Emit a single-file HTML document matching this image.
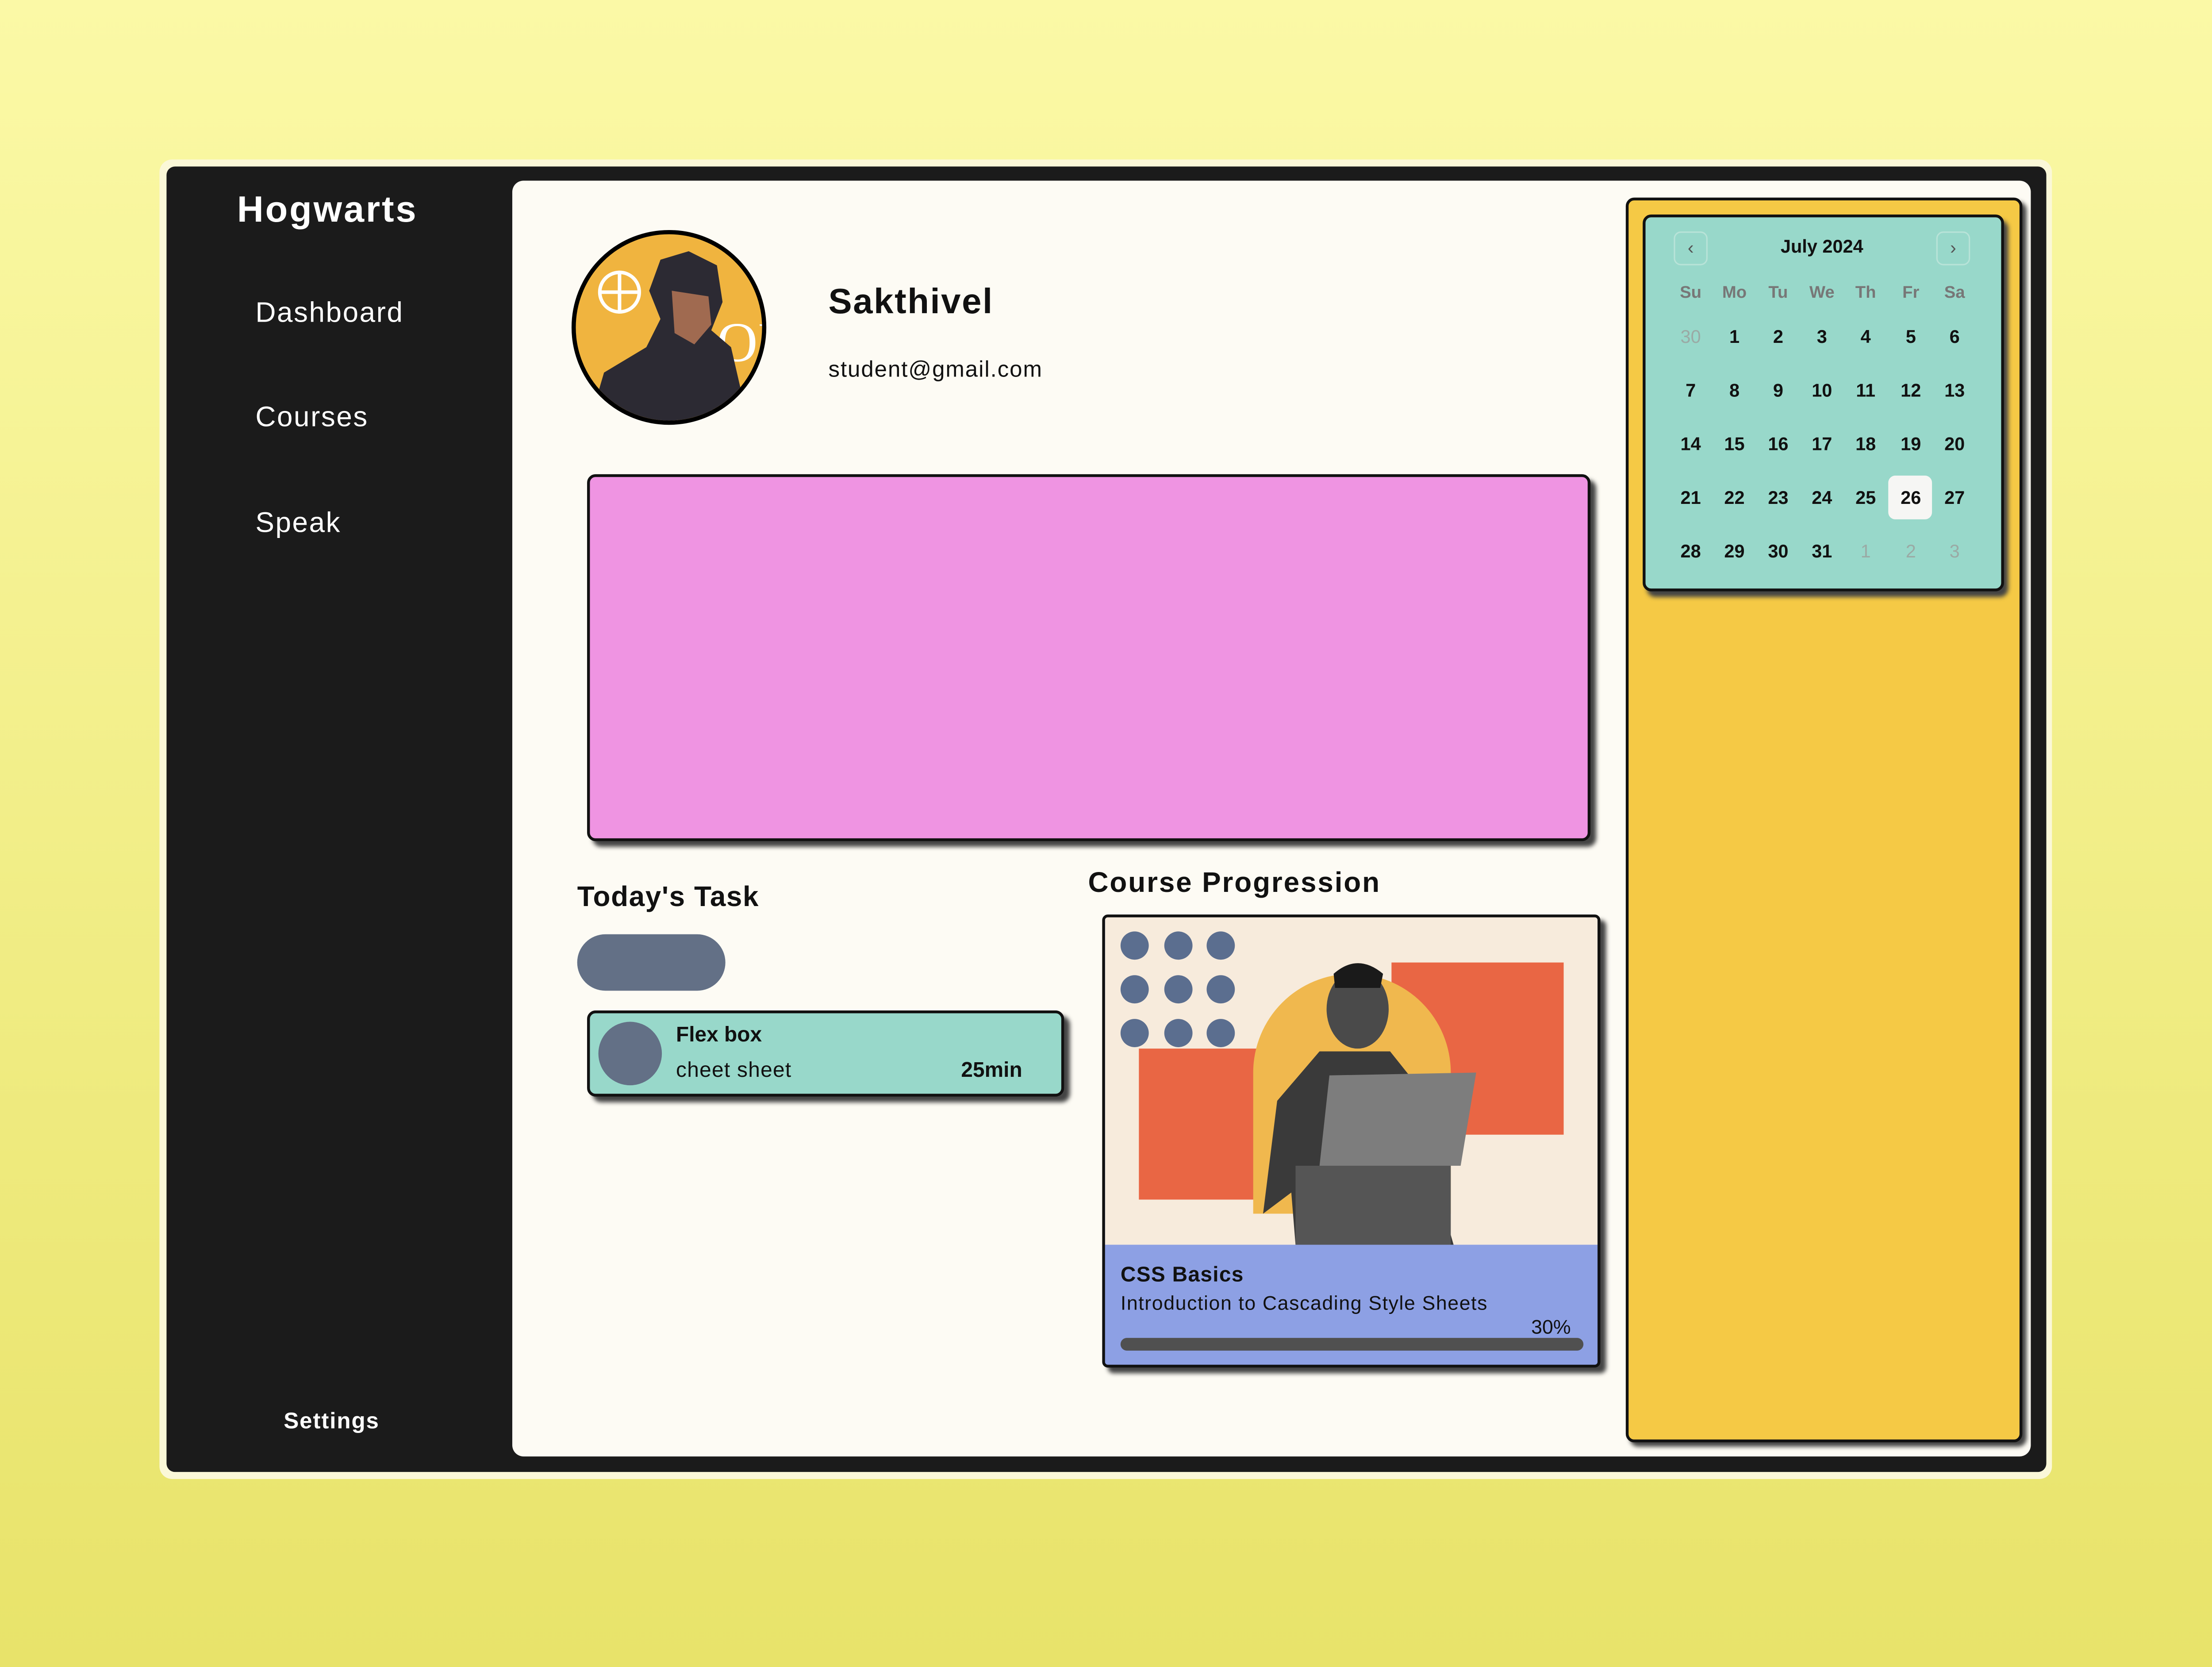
<!DOCTYPE html>
<html><head><meta charset="utf-8"><style>
*{margin:0;padding:0;box-sizing:border-box}
html,body{width:5088px;height:3768px;overflow:hidden}
body{background:linear-gradient(#fbf9a6,#e8e36a);font-family:"Liberation Sans",sans-serif}
#s{position:absolute;left:0;top:0;width:1568px;height:1161px;transform:scale(3.19,3.19);transform-origin:0 0}
.a{position:absolute}
.t{position:absolute;white-space:nowrap;line-height:1}
.b{font-weight:bold}
.cal .t{transform:translateX(-50%);font-size:13px;font-weight:bold;color:#111}
</style></head><body><div id="s">
<div class="a" style="left:113px;top:113px;width:1341px;height:935px;background:#fbf8d8;border-radius:9px"></div>
<div class="a" style="left:118px;top:118px;width:1332px;height:925px;background:#1b1b1b;border-radius:6px"></div>
<div class="t b" style="left:168px;top:135px;font-size:26px;color:#fff;letter-spacing:1.2px">Hogwarts</div>
<div class="t" style="left:181px;top:212px;font-size:20px;color:#fff;letter-spacing:.8px">Dashboard</div>
<div class="t" style="left:181px;top:286px;font-size:20px;color:#fff;letter-spacing:.8px">Courses</div>
<div class="t" style="left:181px;top:361px;font-size:20px;color:#fff;letter-spacing:.8px">Speak</div>
<div class="t b" style="left:201px;top:1000px;font-size:16px;color:#fff;letter-spacing:.6px">Settings</div>
<div class="a" style="left:363px;top:128px;width:1076px;height:904px;background:#fdfbf4;border-radius:8px"></div>
<div class="a" style="left:405px;top:163px;width:138px;height:138px;border-radius:50%;border:3px solid #000;background:#f0b43f;overflow:hidden">
<svg width="132" height="132" viewBox="0 0 132 132">
<circle cx="31" cy="41" r="14" fill="none" stroke="#fff" stroke-width="2.5"/><line x1="17" y1="41" x2="45" y2="41" stroke="#fff" stroke-width="2.5"/><line x1="31" y1="27" x2="31" y2="55" stroke="#fff" stroke-width="2.5"/>
<text x="100" y="90" font-size="40" fill="#fff" font-family="Liberation Serif">OI</text>
<path d="M10 132 L20 98 L50 80 L60 60 L52 40 L60 18 L80 12 L100 22 L104 48 L96 68 L110 80 L122 132Z" fill="#2c2a33"/>
<path d="M68 40 L94 44 L96 64 L84 78 L70 70Z" fill="#a06a50"/>
</svg></div>
<div class="t b" style="left:587px;top:202px;font-size:25px;color:#111;letter-spacing:.8px">Sakthivel</div>
<div class="t" style="left:587px;top:255px;font-size:16px;color:#111;letter-spacing:.6px">student@gmail.com</div>
<div class="a" style="left:416px;top:336px;width:711px;height:260px;background:#ef94e2;border:2px solid #111;border-radius:6px;box-shadow:4px 4px 3px #444"></div>
<div class="t b" style="left:409px;top:626px;font-size:20px;color:#111;letter-spacing:.5px">Today's Task</div>
<div class="a" style="left:409px;top:662px;width:105px;height:40px;background:#637086;border-radius:20px"></div>
<div class="a" style="left:416px;top:716px;width:338px;height:61px;background:#98d8ca;border:2px solid #111;border-radius:6px;box-shadow:4px 4px 3px #444"></div>
<div class="a" style="left:424px;top:724px;width:45px;height:45px;background:#637086;border-radius:50%"></div>
<div class="t b" style="left:479px;top:726px;font-size:15px;color:#111">Flex box</div>
<div class="t" style="left:479px;top:751px;font-size:15px;color:#111;letter-spacing:.4px">cheet sheet</div>
<div class="t b" style="left:681px;top:751px;font-size:15px;color:#111">25min</div>
<div class="t b" style="left:771px;top:616px;font-size:20px;color:#111;letter-spacing:.9px">Course Progression</div>
<div class="a" style="left:781px;top:648px;width:353px;height:321px;border:2px solid #111;border-radius:4px;box-shadow:4px 4px 3px #444;overflow:hidden;background:#8da0e4">
<svg class="a" style="left:0;top:0" width="349" height="232" viewBox="783 650 349 232">
<rect x="783" y="650" width="349" height="232" fill="#f7ebdc"/>
<rect x="807" y="743" width="100" height="107" fill="#e96644"/>
<rect x="986" y="682" width="122" height="122" fill="#e96644"/>
<path d="M888 860 V760 A70 70 0 0 1 1028 760 V860Z" fill="#f0b84e"/>
<g fill="#5b6e8f"><circle cx="804" cy="670" r="10"/><circle cx="835" cy="670" r="10"/><circle cx="865" cy="670" r="10"/><circle cx="804" cy="701" r="10"/><circle cx="835" cy="701" r="10"/><circle cx="865" cy="701" r="10"/><circle cx="804" cy="732" r="10"/><circle cx="835" cy="732" r="10"/><circle cx="865" cy="732" r="10"/></g>
<path d="M918 882 L915 845 L895 860 L905 780 L935 745 L985 745 L1005 770 L1015 830 L1030 882Z" fill="#3a3a3a"/>
<ellipse cx="962" cy="715" rx="22" ry="28" fill="#4a4a4a"/>
<path d="M945 690 Q962 675 980 690 L978 700 L946 700Z" fill="#1a1a1a"/>
<path d="M942 762 L1046 760 L1035 826 L935 826Z" fill="#7d7d7d"/>
<rect x="918" y="826" width="110" height="56" fill="#555"/>
</svg>
<div class="t b" style="left:11px;top:246px;font-size:15px;color:#111;letter-spacing:.4px">CSS Basics</div>
<div class="t" style="left:11px;top:266px;font-size:14px;color:#111;letter-spacing:.5px">Introduction to Cascading Style Sheets</div>
<div class="t" style="left:302px;top:283px;font-size:14px;color:#111">30%</div>
<div class="a" style="left:11px;top:298px;width:328px;height:9px;background:#505050;border-radius:5px"></div>
</div>
<div class="a" style="left:1152px;top:140px;width:281px;height:882px;background:#f5c945;border:2px solid #111;border-radius:6px;box-shadow:3px 3px 3px #444"></div>
<div class="a cal" style="left:1164px;top:152px;width:256px;height:267px;background:#98d8ca;border:2px solid #111;border-radius:6px;box-shadow:3px 4px 3px #444"></div>
<div class="a" style="left:1186px;top:164px;width:24px;height:24px;border:1px solid #b8e3d8;border-radius:5px;color:#555;font-size:13px;text-align:center;line-height:22px">‹</div>
<div class="a" style="left:1372px;top:164px;width:24px;height:24px;border:1px solid #b8e3d8;border-radius:5px;color:#555;font-size:13px;text-align:center;line-height:22px">›</div>
<div class="a" style="left:1338px;top:337px;width:31px;height:31px;background:#f6f6f4;border-radius:5px"></div>
<div class="cal">
<div class="t" style="left:1291px;top:168px">July 2024</div>
<div class="t" style="left:1198px;top:201px;color:#777;font-size:12px">Su</div><div class="t" style="left:1229px;top:201px;color:#777;font-size:12px">Mo</div><div class="t" style="left:1260px;top:201px;color:#777;font-size:12px">Tu</div><div class="t" style="left:1291px;top:201px;color:#777;font-size:12px">We</div><div class="t" style="left:1322px;top:201px;color:#777;font-size:12px">Th</div><div class="t" style="left:1354px;top:201px;color:#777;font-size:12px">Fr</div><div class="t" style="left:1385px;top:201px;color:#777;font-size:12px">Sa</div>
<div class="t" style="left:1198px;top:232px;color:#9aaaa5;font-weight:normal">30</div><div class="t" style="left:1229px;top:232px">1</div><div class="t" style="left:1260px;top:232px">2</div><div class="t" style="left:1291px;top:232px">3</div><div class="t" style="left:1322px;top:232px">4</div><div class="t" style="left:1354px;top:232px">5</div><div class="t" style="left:1385px;top:232px">6</div>
<div class="t" style="left:1198px;top:270px">7</div><div class="t" style="left:1229px;top:270px">8</div><div class="t" style="left:1260px;top:270px">9</div><div class="t" style="left:1291px;top:270px">10</div><div class="t" style="left:1322px;top:270px">11</div><div class="t" style="left:1354px;top:270px">12</div><div class="t" style="left:1385px;top:270px">13</div>
<div class="t" style="left:1198px;top:308px">14</div><div class="t" style="left:1229px;top:308px">15</div><div class="t" style="left:1260px;top:308px">16</div><div class="t" style="left:1291px;top:308px">17</div><div class="t" style="left:1322px;top:308px">18</div><div class="t" style="left:1354px;top:308px">19</div><div class="t" style="left:1385px;top:308px">20</div>
<div class="t" style="left:1198px;top:346px">21</div><div class="t" style="left:1229px;top:346px">22</div><div class="t" style="left:1260px;top:346px">23</div><div class="t" style="left:1291px;top:346px">24</div><div class="t" style="left:1322px;top:346px">25</div><div class="t" style="left:1354px;top:346px">26</div><div class="t" style="left:1385px;top:346px">27</div>
<div class="t" style="left:1198px;top:384px">28</div><div class="t" style="left:1229px;top:384px">29</div><div class="t" style="left:1260px;top:384px">30</div><div class="t" style="left:1291px;top:384px">31</div><div class="t" style="left:1322px;top:384px;color:#9aaaa5;font-weight:normal">1</div><div class="t" style="left:1354px;top:384px;color:#9aaaa5;font-weight:normal">2</div><div class="t" style="left:1385px;top:384px;color:#9aaaa5;font-weight:normal">3</div>
</div>
</div></body></html>
